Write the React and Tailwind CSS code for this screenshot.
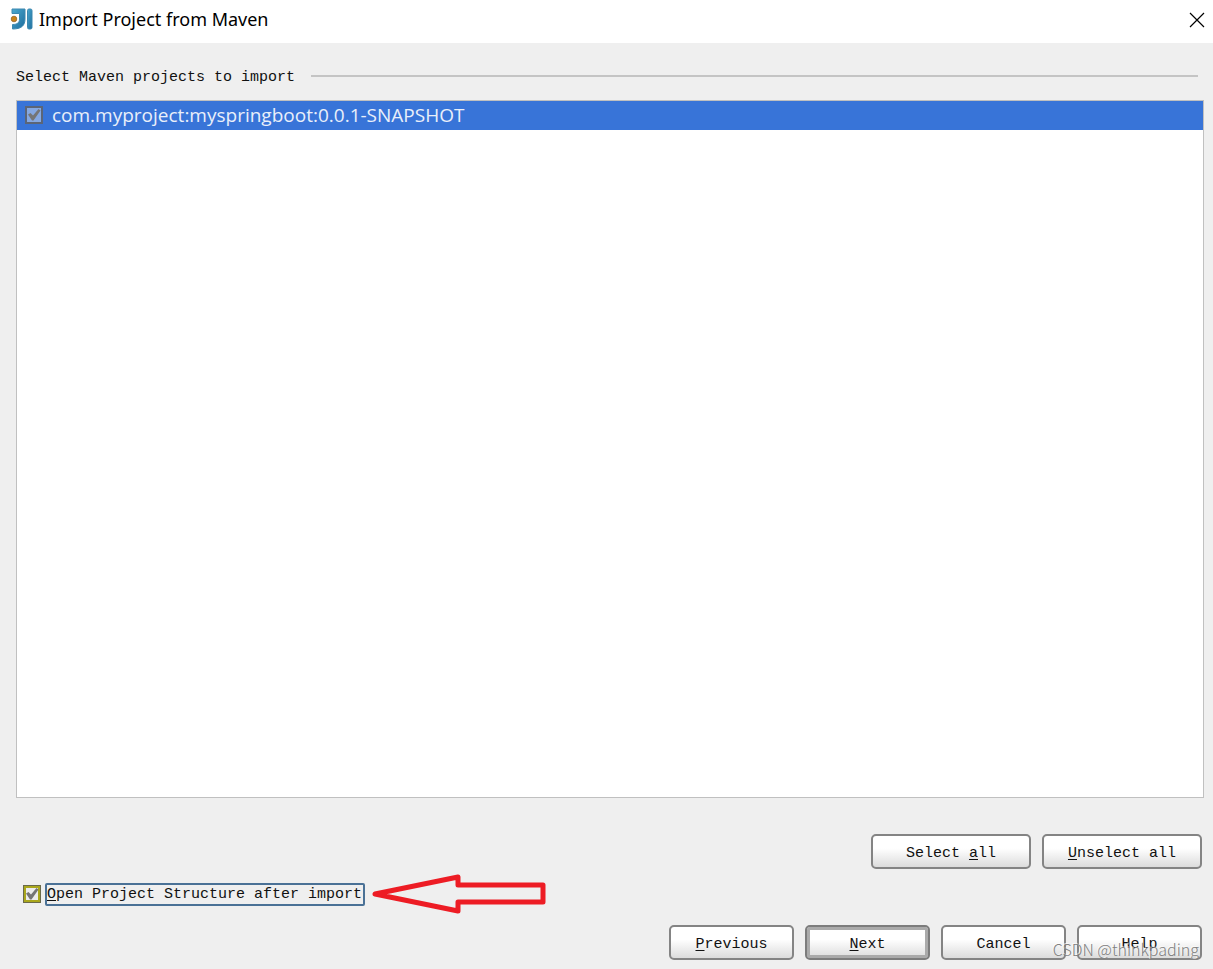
import { useState } from "react";

const projects = ["com.myproject:myspringboot:0.0.1-SNAPSHOT"];

function AppLogo() {
  return (
    <svg className="h-6 w-6" viewBox="0 0 24 24" aria-hidden="true">
      <defs>
        <linearGradient id="logo" x1="0" y1="0" x2="1" y2="1">
          <stop offset="0" stopColor="#4ba9d0" />
          <stop offset="1" stopColor="#1d6c9c" />
        </linearGradient>
      </defs>
      <path
        d="M2 1H15V11C15 18 11 21 2.5 21V16.5C7.5 16.5 9.5 14.5 9.5 11V5.5H2Z"
        fill="url(#logo)"
        stroke="#3c88b0"
        strokeLinejoin="round"
      />
      <rect x="17.5" y="1" width="4.5" height="20" rx="1.5" fill="url(#logo)" stroke="#3c88b0" />
      <circle cx="4" cy="11" r="2.8" fill="#c98318" stroke="#96652a" strokeWidth="0.8" />
    </svg>
  );
}

function Check({ id, checked, onChange, className }) {
  return (
    <span className="relative block h-[18px] w-[18px] shrink-0">
      <input
        id={id}
        type="checkbox"
        checked={checked}
        onChange={onChange}
        className={`block h-[18px] w-[18px] appearance-none ${className}`}
      />
      {checked && (
        <svg className="pointer-events-none absolute inset-0" viewBox="0 0 18 18" aria-hidden="true">
          <path d="M3 8.5L5.5 7L8 9.5L13.5 3L15.5 4.5L8.5 14.5H7Z" fill="#757575" />
        </svg>
      )}
    </span>
  );
}

function Button({ label, mnemonic, wide, primary, onClick }) {
  const i = mnemonic ? label.indexOf(mnemonic) : -1;

  return (
    <button
      type="button"
      onClick={onClick}
      className={`h-[35px] rounded-[5px] border-2 bg-linear-to-b from-white from-40% to-[#dcdcdc] pt-1 ${
        wide ? "w-40" : "w-[125px]"
      } ${
        primary ? "border-[#7c7c7c] shadow-[inset_0_0_0_3px_#aaaaaa]" : "border-[#848484]"
      }`}
    >
      {i < 0 ? (
        label
      ) : (
        <>
          {label.slice(0, i)}
          <span className="underline underline-offset-2">{mnemonic}</span>
          {label.slice(i + 1)}
        </>
      )}
    </button>
  );
}

export default function App() {
  const [selected, setSelected] = useState(projects);
  const [openStructure, setOpenStructure] = useState(true);

  const toggle = (name) =>
    setSelected(selected.includes(name) ? selected.filter((p) => p !== name) : [...selected, name]);

  return (
    <div className="relative flex min-h-screen flex-col bg-[#efefef] font-['Liberation_Mono','Noto_Sans_CJK_SC',monospace] text-[15px] leading-6 text-[#111111]">
      <header className="flex h-[43px] items-center bg-white pr-2 pb-1 pl-[10px]">
        <AppLogo />
        <h1 className="ml-[5px] pb-px font-['Noto_Sans',sans-serif] text-[18px] text-black">Import Project from Maven</h1>
        <button type="button" aria-label="Close" className="ml-auto">
          <svg className="h-4 w-4" viewBox="0 0 16 16" stroke="#000" strokeWidth="1.2">
            <path d="M1 1L15 15M15 1L1 15" />
          </svg>
        </button>
      </header>

      <main className="flex flex-1 flex-col pt-[23px] pr-[9px] pb-[9px] pl-4">
        <div className="flex items-center gap-4 pr-[6px]">
          <h2>Select Maven projects to import</h2>
          <div className="mb-1 h-[2px] flex-1 bg-[#c4c4c4]" />
        </div>

        <ul className="mt-[10px] flex-1 border border-[#c0c0c0] bg-white">
          {projects.map((name) => (
            <li key={name} className="flex h-[29px] items-center gap-[9px] bg-[#3874d8] pb-px pl-2">
              <Check
                id={name}
                checked={selected.includes(name)}
                onChange={() => toggle(name)}
                className="border-2 border-[#5b6577] bg-[#85a8e2]"
              />
              <label htmlFor={name} className="font-['Open_Sans',sans-serif] text-[19px] text-[#e9effa]">
                {name}
              </label>
            </li>
          ))}
        </ul>

        <div className="mt-9 flex justify-end gap-[11px] pr-[2px]">
          <Button label="Select all" mnemonic="a" wide onClick={() => setSelected(projects)} />
          <Button label="Unselect all" mnemonic="U" wide onClick={() => setSelected([])} />
        </div>

        <div className="mt-[14px] flex h-[23px] items-center pb-px pl-[7px]">
          <Check
            id="open-structure"
            checked={openStructure}
            onChange={() => setOpenStructure(!openStructure)}
            className="border border-[#6a6a4a] bg-[#ececec] shadow-[inset_0_0_0_2px_#aaa71c]"
          />
          <label
            htmlFor="open-structure"
            className="ml-1 flex h-[23px] items-center rounded-xs border-2 border-[#4a7196] pt-[2px] pr-px whitespace-pre"
          >
            <span className="underline underline-offset-2">O</span>pen Project Structure after import
          </label>
          <svg className="h-10 w-[184px]" viewBox="0 0 184 40" fill="none" stroke="#ed1c24" strokeWidth="5" aria-hidden="true">
            <path d="M10 20L93 3V11H178V28H93V37Z" strokeLinejoin="round" />
          </svg>
        </div>

        <div className="mt-[19px] flex justify-end gap-[11px] pr-[2px]">
          <Button label="Previous" mnemonic="P" />
          <Button label="Next" mnemonic="N" primary />
          <Button label="Cancel" />
          <Button label="Help" />
        </div>
      </main>

      <p className="pointer-events-none absolute right-[14px] bottom-2 font-['Noto_Sans_CJK_SC',sans-serif] text-base font-light text-[#808080] [text-shadow:-1px_-1px_0_#ffffffaa]">
        CSDN @thinkpading
      </p>
    </div>
  );
}
